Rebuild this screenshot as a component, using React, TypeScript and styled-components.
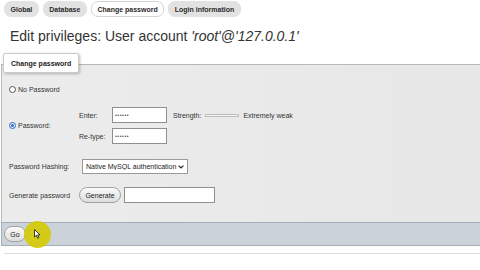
import styled, { createGlobalStyle } from "styled-components";

const GlobalStyle = createGlobalStyle`
    html, body {
        margin: 0;
        padding: 0;
        background: #ffffff;
    }
    body {
        font-family: "Liberation Sans", Arial, sans-serif;
        color: #333333;
    }
`

const tabs = [
    { label: "Global" },
    { label: "Database" },
    { label: "Change password", active: true },
    { label: "Login information" },
]

const App = () => {
    return (
        <Page>
            <GlobalStyle />
            <TabBar>
                {tabs.map((t) => (
                    <Tab key={t.label} $active={t.active}>{t.label}</Tab>
                ))}
            </TabBar>
            <Heading>
                Edit privileges: User account <em>'root'@'127.0.0.1'</em>
            </Heading>

            <Fieldset>
                <Legend>Change password</Legend>

                <Row $top={10}>
                    <RadioLabel>
                        <Radio />
                        No Password
                    </RadioLabel>
                </Row>

                <FormRow $top={12}>
                    <RadioLabel>
                        <Radio $checked />
                        Password:
                    </RadioLabel>
                    <PasswordGrid>
                        <FieldLabel>Enter:</FieldLabel>
                        <TextInput type="password" value="123456" readOnly $secret />
                        <Strength>
                            Strength:
                            <Meter />
                            Extremely weak
                        </Strength>
                        <FieldLabel>Re-type:</FieldLabel>
                        <TextInput type="password" value="123456" readOnly $secret />
                    </PasswordGrid>
                </FormRow>

                <FormRow $top={15}>
                    <FieldLabel>Password Hashing:</FieldLabel>
                    <SelectWrap>
                        <Select defaultValue="native">
                            <option value="native">Native MySQL authentication</option>
                        </Select>
                        <Chevron width="6" height="4" viewBox="0 0 6 4">
                            <path d="M0.6 0.6 L3 3 L5.4 0.6" fill="none" stroke="#222" strokeWidth="1.2" />
                        </Chevron>
                    </SelectWrap>
                </FormRow>

                <FormRow $top={13}>
                    <FieldLabel>Generate password</FieldLabel>
                    <Inline>
                        <PillButton>Generate</PillButton>
                        <TextInput type="text" $width={91} readOnly />
                    </Inline>
                </FormRow>
            </Fieldset>

            <Footer>
                <PillButton $width={22}>Go</PillButton>
            </Footer>
            <Rule />

            <Highlight />
            <Cursor width="7" height="10" viewBox="0 0 7 10">
                <path d="M0.5 0.5 L0.5 8 L2.3 6.3 L3.6 9.2 L4.8 8.7 L3.6 5.9 L6 5.9 Z" fill="#fff" stroke="#111" strokeWidth="0.8" strokeLinejoin="round" />
            </Cursor>
        </Page>
    )
}

export default App;

const Page = styled.div`
    position: relative;
    width: 480px;
    height: 270px;
    overflow: hidden;
    font-size: 7px;
`
const TabBar = styled.div`
    display: flex;
    gap: 4px;
    padding: 1px 0 0 4px;
`
const Tab = styled.span<{ $active?: boolean }>`
    display: inline-flex;
    align-items: center;
    box-sizing: border-box;
    height: 16px;
    padding: 0 5.5px;
    border-radius: 7px;
    font-size: 7px;
    font-weight: bold;
    color: #2a2a2a;
    background: ${(p) => (p.$active ? "#ffffff" : "#e2e2e2")};
    border: 1px solid ${(p) => (p.$active ? "#d4d4d4" : "#e2e2e2")};
`
const Heading = styled.h2`
    margin: 11px 0 0 10px;
    font-size: 14px;
    line-height: 16px;
    font-weight: normal;
    color: #333333;
    em {
        font-style: italic;
    }
`
const Fieldset = styled.div`
    margin: 20px -4px 0 1px;
    padding: 0 0 19px 7px;
    background: linear-gradient(to right, #ececec, #e7e7e7);
    border: 1px solid #b8b8b8;
    border-bottom: none;
`
const Legend = styled.div`
    display: flex;
    align-items: center;
    box-sizing: border-box;
    width: fit-content;
    height: 20px;
    margin: -12px 0 0 -6px;
    padding: 0 7px;
    background: #ffffff;
    border: 1px solid #cacaca;
    border-radius: 2px;
    box-shadow: 1px 1px 3px rgba(0, 0, 0, 0.25);
    font-weight: bold;
    color: #222;
`
const Row = styled.div<{ $top: number }>`
    display: flex;
    align-items: center;
    height: 12px;
    margin-top: ${(p) => p.$top}px;
`
const FormRow = styled.div<{ $top: number }>`
    display: grid;
    grid-template-columns: 70px auto;
    align-items: center;
    margin-top: ${(p) => p.$top}px;
`
const RadioLabel = styled.label`
    display: flex;
    align-items: center;
    gap: 2px;
    color: #333;
`
const Radio = styled.span<{ $checked?: boolean }>`
    box-sizing: border-box;
    width: 7px;
    height: 7px;
    border-radius: 50%;
    border: 1px solid ${(p) => (p.$checked ? "#2d6bc4" : "#555")};
    background: #fff;
    box-shadow: ${(p) => (p.$checked ? "inset 0 0 0 1px #fff, inset 0 0 0 3px #2d6bc4" : "none")};
`
const PasswordGrid = styled.div`
    display: grid;
    grid-template-columns: 33px 55px auto;
    grid-auto-rows: 16px;
    row-gap: 5px;
    align-items: center;
`
const FieldLabel = styled.span`
    color: #333;
`
const TextInput = styled.input<{ $width?: number; $secret?: boolean }>`
    box-sizing: border-box;
    width: ${(p) => p.$width ?? 55}px;
    height: 16px;
    margin: 0;
    padding: 0 2px;
    border: 1px solid #8f8f8f;
    background: #fff;
    font-family: "Liberation Sans", Arial, sans-serif;
    font-size: ${(p) => (p.$secret ? 5 : 7)}px;
    letter-spacing: ${(p) => (p.$secret ? 0.6 : 0)}px;
    color: #444;
    outline: none;
`
const Strength = styled.span`
    display: flex;
    align-items: center;
    gap: 4px;
    margin-left: 6px;
    color: #333;
    white-space: nowrap;
`
const Meter = styled.span`
    box-sizing: border-box;
    width: 34px;
    height: 3px;
    border: 1px solid #bdbdbd;
    background: #f2f2f2;
`
const SelectWrap = styled.div`
    position: relative;
    width: 106px;
    height: 15px;
    margin-left: 3px;
`
const Select = styled.select`
    appearance: none;
    box-sizing: border-box;
    width: 100%;
    height: 100%;
    margin: 0;
    padding: 0 0 0 3px;
    border: 1px solid #9a9a9a;
    border-radius: 0;
    background: #fff;
    font-family: "Liberation Sans", Arial, sans-serif;
    font-size: 7px;
    color: #222;
`
const Chevron = styled.svg`
    position: absolute;
    right: 4px;
    top: 6px;
    pointer-events: none;
`
const Inline = styled.div`
    display: flex;
    align-items: center;
    gap: 3px;
`
const PillButton = styled.button<{ $width?: number }>`
    box-sizing: border-box;
    width: ${(p) => p.$width ?? 42}px;
    height: 16px;
    padding: 0;
    border: 1px solid #a3a3a3;
    border-radius: 8px;
    background: linear-gradient(#fbfbfb, #dcdcdc);
    font-family: "Liberation Sans", Arial, sans-serif;
    font-size: 7px;
    color: #1a1a1a;
`
const Footer = styled.div`
    display: flex;
    align-items: center;
    height: 22px;
    margin: 0 -4px 0 1px;
    padding: 0 2px;
    background: #cbd2d9;
    border: 1px solid #a8adb3;
`
const Rule = styled.div`
    margin: 7px 0 0 4px;
    border-top: 1px solid #dcdcdc;
`
const Highlight = styled.div`
    position: absolute;
    left: 24px;
    top: 221px;
    width: 27px;
    height: 27px;
    border-radius: 50%;
    background: rgba(212, 202, 8, 0.92);
`
const Cursor = styled.svg`
    position: absolute;
    left: 34px;
    top: 229px;
`
